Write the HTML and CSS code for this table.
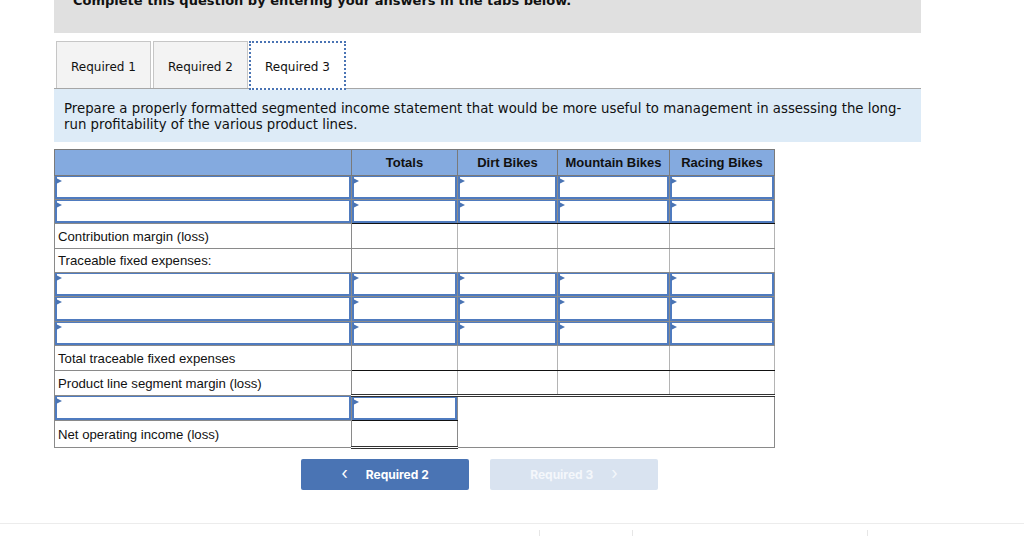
FILE: index.html
```html
<!DOCTYPE html>
<html>
<head>
<meta charset="utf-8">
<link rel="stylesheet" href="styles.css">
</head>
<body>
<div class="page">
  <div class="banner"><p class="banner-text">Complete this question by entering your answers in the tabs below.</p></div>
  <div class="tabs">
    <div class="tab">Required 1</div>
    <div class="tab">Required 2</div>
    <div class="tab active">Required 3</div>
  </div>
  <div class="instructions">Prepare a properly formatted segmented income statement that would be more useful to management in assessing the long-run profitability of the various product lines.</div>
  <table class="grid">
    <colgroup>
      <col class="c-label"><col class="c-tot"><col class="c-dirt"><col class="c-mtn"><col class="c-race">
    </colgroup>
    <thead>
      <tr class="hd"><th></th><th>Totals</th><th>Dirt Bikes</th><th>Mountain Bikes</th><th>Racing Bikes</th></tr>
    </thead>
    <tbody>
      <tr class="r24"><td class="in"><div class="box"></div></td><td class="in"><div class="box"></div></td><td class="in"><div class="box"></div></td><td class="in"><div class="box"></div></td><td class="in"><div class="box"></div></td></tr>
      <tr class="r24 sum"><td class="in"><div class="box"></div></td><td class="in"><div class="box"></div></td><td class="in"><div class="box"></div></td><td class="in"><div class="box"></div></td><td class="in"><div class="box"></div></td></tr>
      <tr class="r25"><td class="lbl">Contribution margin (loss)</td><td class="amt"></td><td class="amt"></td><td class="amt"></td><td class="amt"></td></tr>
      <tr class="r24"><td class="lbl">Traceable fixed expenses:</td><td class="amt"></td><td class="amt"></td><td class="amt"></td><td class="amt"></td></tr>
      <tr class="r24"><td class="in"><div class="box"></div></td><td class="in"><div class="box"></div></td><td class="in"><div class="box"></div></td><td class="in"><div class="box"></div></td><td class="in"><div class="box"></div></td></tr>
      <tr class="r25"><td class="in"><div class="box"></div></td><td class="in"><div class="box"></div></td><td class="in"><div class="box"></div></td><td class="in"><div class="box"></div></td><td class="in"><div class="box"></div></td></tr>
      <tr class="r24"><td class="in"><div class="box"></div></td><td class="in"><div class="box"></div></td><td class="in"><div class="box"></div></td><td class="in"><div class="box"></div></td><td class="in"><div class="box"></div></td></tr>
      <tr class="r25 sum"><td class="lbl">Total traceable fixed expenses</td><td class="amt"></td><td class="amt"></td><td class="amt"></td><td class="amt"></td></tr>
      <tr class="r25 dbl"><td class="lbl">Product line segment margin (loss)</td><td class="amt"></td><td class="amt"></td><td class="amt"></td><td class="amt"></td></tr>
      <tr class="r25 sum"><td class="in"><div class="box"></div></td><td class="in"><div class="box"></div></td><td class="blank" colspan="3" rowspan="2"></td></tr>
      <tr class="r27 dbl"><td class="lbl">Net operating income (loss)</td><td class="amt"></td></tr>
    </tbody>
  </table>
  <div class="nav">
    <button class="btn prev"><span class="chev">&lsaquo;</span><span>Required 2</span></button>
    <button class="btn next"><span>Required 3</span><span class="chev">&rsaquo;</span></button>
  </div>
</div>
<div class="footer">
  <span class="tick t1"></span><span class="tick t2"></span><span class="tick t3"></span>
</div>
</body>
</html>
```

FILE: styles.css
```css
* { box-sizing: border-box; }
html, body { margin: 0; padding: 0; background: #fff; }
body { width: 1024px; height: 536px; overflow: hidden; font-family: "DejaVu Sans", Verdana, sans-serif; color: #1a1a1a; }

.page { margin-left: 54px; width: 867px; }

.banner { height: 33px; background: #e0e0e0; overflow: hidden; }
.banner-text { margin: -7px 0 0 19px; font-size: 13px; line-height: 16px; font-weight: bold; color: #111; }

.tabs { display: flex; margin-top: 8px; height: 48px; border-bottom: 1px solid #a6a6a6; padding-left: 2px; }
.tab { width: 95px; height: 47px; background: #f3f3f3; border: 1px solid #c6c6c6; border-bottom: none; font-size: 12px; display: flex; align-items: center; justify-content: center; padding-top: 3px; margin-right: 2px; color: #111; }
.tab:nth-child(2) { margin-right: 1px; }
.tab.active { background: #fff; border: 2px dotted #4a74b4; height: 49px; margin-bottom: -2px; width: 97px; padding-top: 2px; position: relative; z-index: 1; }

.instructions { background: #ddebf7; padding: 12px 10px 8px 10px; font-size: 13.3px; line-height: 16px; color: #111; height: 53px; }

.grid { margin-top: 7px; border-collapse: collapse; table-layout: fixed; width: 720px; font-family: "Liberation Sans", Arial, sans-serif; font-size: 13px; color: #111; }
.c-label { width: 297px; }
.c-tot { width: 106px; }
.c-dirt { width: 100px; }
.c-mtn { width: 112px; }
.c-race { width: 105px; }

.grid th, .grid td { border: 1px solid #8a8a8a; padding: 0; }
.hd th { height: 26px; background: #84aadf; font-weight: bold; text-align: center; vertical-align: middle; padding-bottom: 1px; border-color: #7a7a7a; }
.r24 td { height: 24px; }
.r25 td { height: 25px; }
.r27 td { height: 27px; }
.grid td.amt { border-left-color: #b4b4b4; border-right-color: #b4b4b4; }
.grid td.lbl { padding-left: 3px; vertical-align: middle; font-size: 13.2px; }
.sum td.amt, .sum td.in + td.in { border-bottom: 1px solid #111; }
.dbl td.amt { border-bottom: 3px double #333; }
.grid td.blank { border: 1px solid #8a8a8a; }

.in { position: relative; }
.box { height: 100%; min-height: 22px; border: 2px solid #4f7bbf; border-top-width: 1px; position: relative; background: #fff; }
.box::before { content: ""; position: absolute; left: -1px; top: 1px; border-left: 6px solid #4a74b4; border-top: 3.5px solid transparent; border-bottom: 3.5px solid transparent; }

.nav { display: flex; gap: 21px; margin-top: 10px; margin-left: 247px; }
.btn { width: 168px; height: 31px; border: none; border-radius: 2px; font-family: Inter, "Liberation Sans", sans-serif; font-size: 12px; font-weight: 700; color: #fff; display: flex; align-items: center; justify-content: center; gap: 18px; padding: 0; }
.btn .chev { font-size: 17px; font-weight: 400; line-height: 1; margin-top: -3px; }
.prev { background: #4a74b4; }
.next { background: #d9e3f0; color: #f4f7fb; }

.footer { position: relative; margin-top: 33px; border-top: 1px solid #ececec; height: 13px; }
.tick { position: absolute; top: 6px; width: 1px; height: 8px; background: #e6e6e6; }
.t1 { left: 539px; }
.t2 { left: 632px; }
.t3 { left: 867px; }
```
